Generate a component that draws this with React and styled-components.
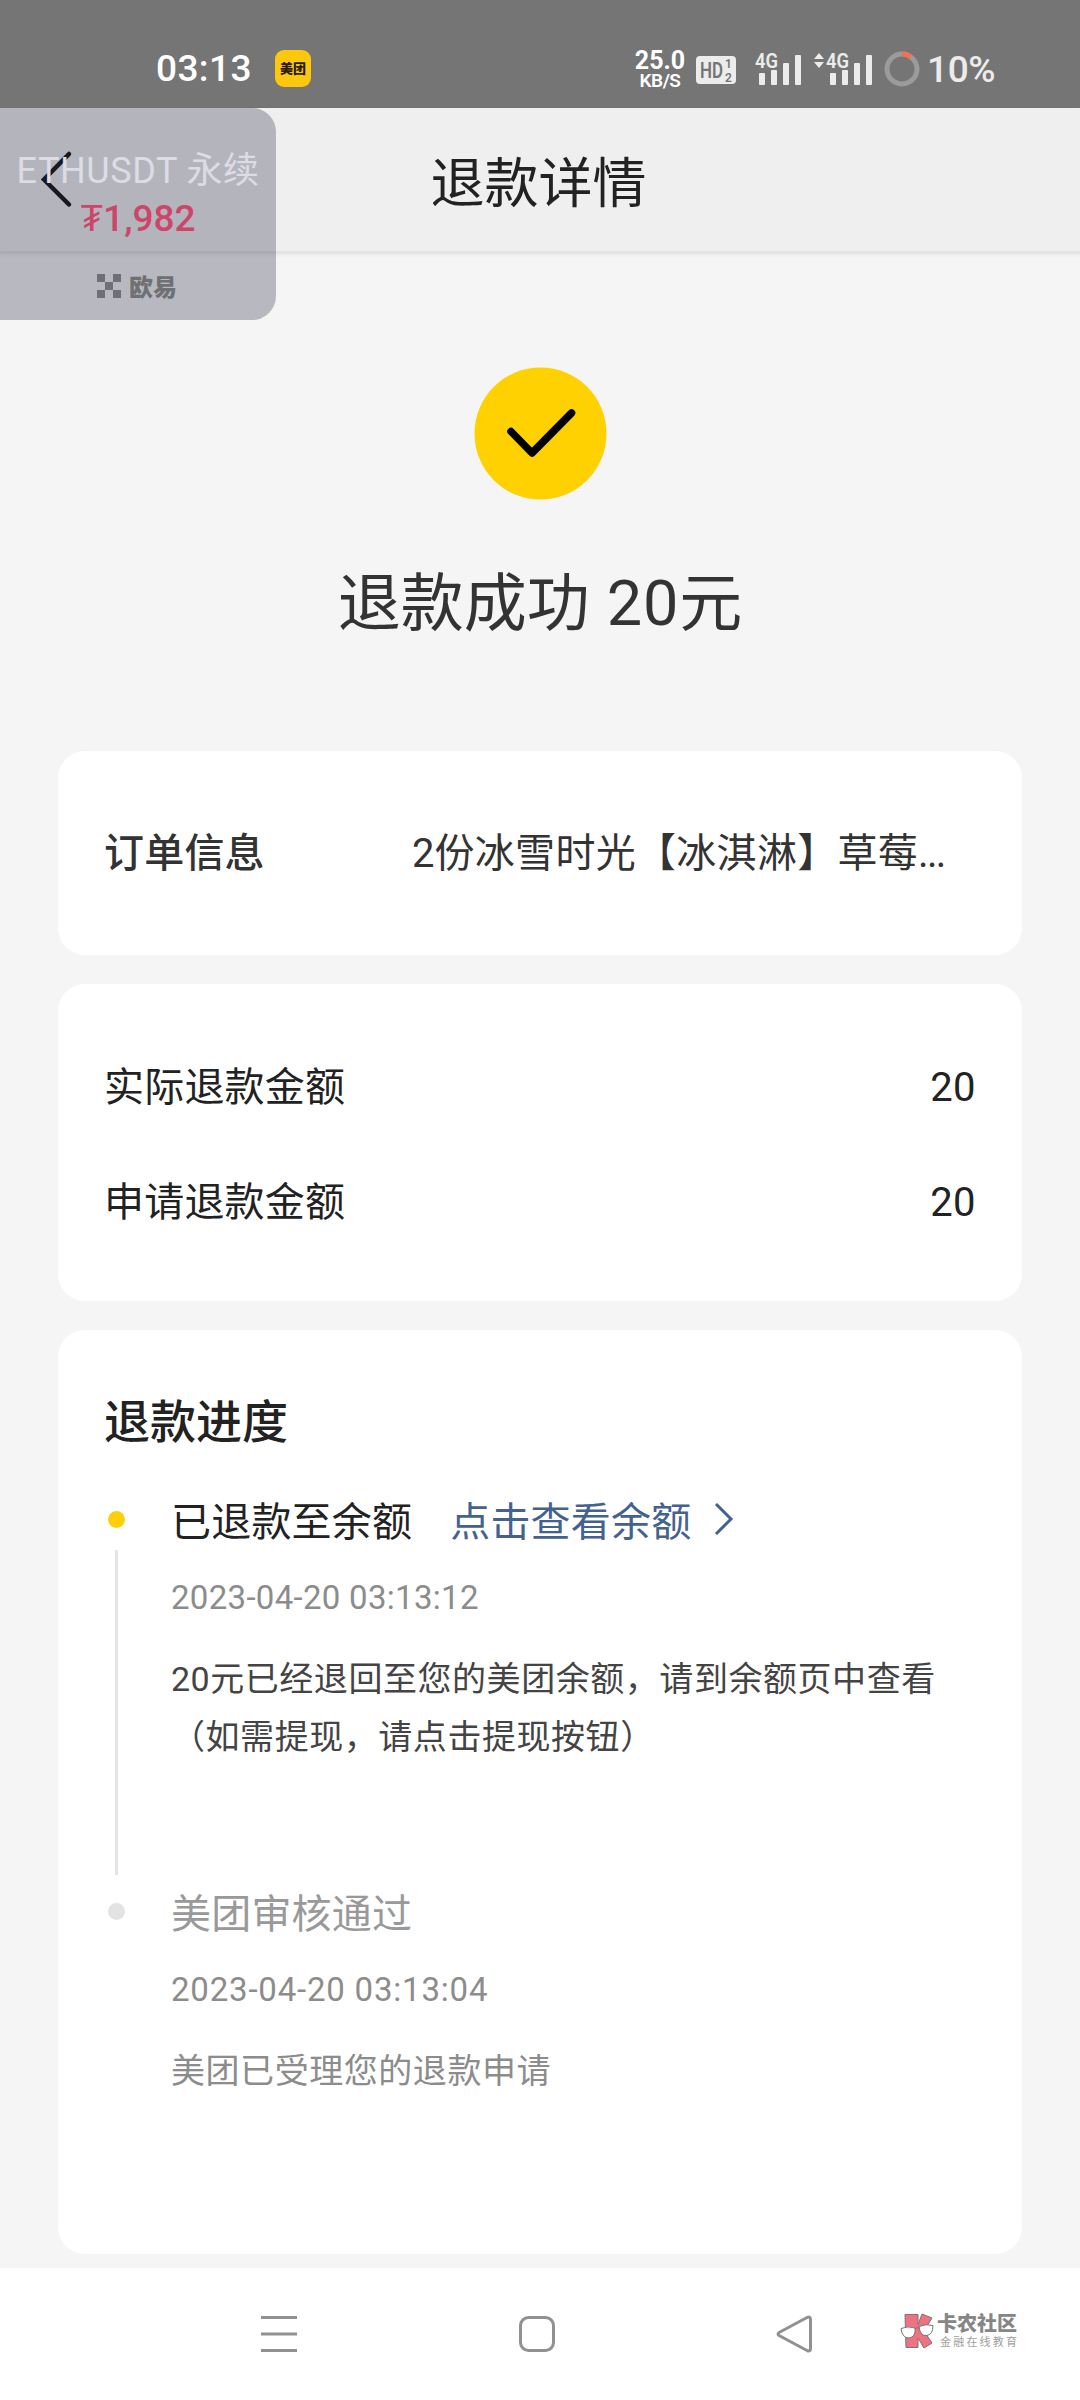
import React from 'react';
import styled, { createGlobalStyle } from 'styled-components';

const GlobalStyle = createGlobalStyle`
    * {
        box-sizing: border-box;
    }
    body {
        margin: 0;
        background: #f5f5f5;
        font-family: "Noto Sans CJK SC", sans-serif;
    }
`

const Page = styled.div`
    position: relative;
    display: flex;
    flex-direction: column;
    width: 1080px;
    height: 2400px;
    overflow: hidden;
    background: #f5f5f5;
    color: #222;
`

const Num = styled.span`
    font-family: Roboto, "Noto Sans CJK SC", sans-serif;
    line-height: 1;
    letter-spacing: ${props => props.$tracking || 0}px;
`

/* status bar */

const StatusBar = styled.div`
    display: flex;
    align-items: center;
    height: 108px;
    padding: 30px 84px 0 156px;
    background: #757575;
    color: #fff;
    font-family: Roboto, sans-serif;
`

const Clock = styled.div`
    width: 119px;
    font-size: 37px;
    font-weight: 500;
    line-height: 40px;
    letter-spacing: 0.4px;
`

const AppBadge = styled.div`
    width: 36px;
    height: 37px;
    border-radius: 9px;
    background: #fcc70d;
    color: #2a1c00;
    font-family: "Noto Sans CJK SC", sans-serif;
    font-size: 13px;
    font-weight: 900;
    line-height: 36px;
    text-align: center;
    white-space: nowrap;
`

const StatusRight = styled.div`
    display: flex;
    align-items: center;
    margin-left: auto;
    color: #ececec;
`

const NetSpeed = styled.div`
    display: flex;
    flex-direction: column;
    align-items: center;
    width: 52px;
    margin-right: 10px;
    padding-top: 3px;
    color: #fff;
`

const SpeedValue = styled.span`
    font-size: 25px;
    font-weight: 700;
    line-height: 20px;
`

const SpeedUnit = styled.span`
    font-size: 19px;
    font-weight: 600;
    line-height: 19px;
    letter-spacing: -0.5px;
`

const HdBadge = styled.svg`
    width: 40px;
    height: 28px;
    margin: 2px 19px 0 0;
    font-weight: 600;
`

const SignalIcon = styled.svg`
    width: 48px;
    height: 34px;
    margin-right: ${props => props.$gap}px;
    overflow: visible;
    font-size: 21px;
    font-weight: 600;
`

const DataArrows = styled.svg`
    width: 12px;
    height: 34px;
    margin-right: 1px;
`

const BatteryRing = styled.svg`
    width: 36px;
    height: 36px;
    margin-right: 7px;
`

const BatteryText = styled.div`
    width: 69px;
    padding-top: 2px;
    font-size: 37px;
    font-weight: 500;
    line-height: 40px;
    letter-spacing: -0.4px;
    white-space: nowrap;
`

/* title bar */

const Header = styled.header`
    display: flex;
    align-items: center;
    justify-content: center;
    height: 146px;
    background: #efefef;
    border-bottom: 3px solid #e4e4e4;
    box-shadow: 0 1px 4px rgba(0, 0, 0, 0.06);
`

const BackButton = styled.div`
    display: flex;
    width: 120px;
    padding-left: 39px;
    margin-right: auto;
`

const Title = styled.h1`
    margin: 0 auto 0 0;
    padding: 1px 123px 0 0;
    font-size: 54px;
    font-weight: 400;
    line-height: 60px;
`

/* floating price window */

const Ticker = styled.div`
    position: absolute;
    top: 108px;
    left: 0;
    display: flex;
    flex-direction: column;
    align-items: center;
    width: 276px;
    height: 212px;
    padding-top: 36px;
    border-radius: 0 24px 24px 0;
    background: rgba(43, 46, 68, 0.3);
`

const TickerPair = styled.div`
    font-size: 36px;
    font-weight: 400;
    line-height: 46px;
    letter-spacing: 0.4px;
    color: #dcdce7;
    white-space: nowrap;
`

const TickerPrice = styled.div`
    font-size: 37px;
    font-weight: 500;
    line-height: 51px;
    color: #cc4669;
`

const TickerBrand = styled.div`
    display: flex;
    align-items: center;
    gap: 8px;
    margin-top: 28px;
    padding-right: 2px;
    color: #6f7073;
    font-size: 24px;
    font-weight: 900;
    line-height: 34px;
`

/* content */

const Result = styled.section`
    display: flex;
    flex-direction: column;
    align-items: center;
    height: 497px;
    padding-top: 113px;
`

const ResultText = styled.div`
    margin-top: 58px;
    font-size: 63px;
    font-weight: 400;
    line-height: 80px;
    word-spacing: 3px;
    color: #333;
`

const Card = styled.section`
    display: flex;
    flex-direction: column;
    height: ${props => props.$height}px;
    margin: 0 58px 29px;
    padding: ${props => props.$padding};
    border-radius: 27px;
    background: #fff;
`

const Row = styled.div`
    display: flex;
    align-items: center;
    justify-content: space-between;
    height: 115px;
    font-size: 40px;
    line-height: 50px;
    letter-spacing: 0.2px;
`

const RowLabel = styled.span`
    font-weight: ${props => props.$strong ? 500 : 400};
    color: ${props => props.$strong ? '#333' : '#222'};
`

const OrderName = styled.span`
    width: 564px;
    color: #333;
    letter-spacing: 0.3px;
    white-space: nowrap;
`

const CardTitle = styled.h2`
    margin: 0 0 35px;
    font-size: 46px;
    font-weight: 500;
    line-height: 60px;
`

const Step = styled.div`
    display: flex;
    height: ${props => props.$height}px;
`

const Rail = styled.div`
    display: flex;
    flex-direction: column;
    align-items: center;
    width: 25px;
    margin-right: 42px;
    padding-top: 28px;
`

const Dot = styled.div`
    width: 17px;
    height: 17px;
    flex: none;
    border-radius: 50%;
    background: ${props => props.$active ? '#fecf0a' : '#e3e3e3'};
`

const RailLine = styled.div`
    width: 3px;
    height: 328px;
    margin-top: 22px;
    background: #e5e5e5;
`

const StepBody = styled.div`
    display: flex;
    flex-direction: column;
    color: ${props => props.$active ? '#444' : '#8c8c8c'};
`

const StepTitle = styled.div`
    display: flex;
    align-items: center;
    height: 71px;
    font-size: 40px;
    letter-spacing: 0.2px;
    color: ${props => props.$active ? '#222' : '#999'};
`

const StepLink = styled.a`
    display: flex;
    align-items: center;
    gap: 23px;
    margin-left: 38px;
    color: #44628f;
`

const StepTime = styled.div`
    height: 94px;
    font-family: Roboto, sans-serif;
    font-size: 33px;
    line-height: 87px;
    letter-spacing: ${props => props.$tracking}px;
    color: #8c8c8c;
`

const StepText = styled.p`
    margin: 0;
    font-size: 34px;
    line-height: 58px;
    letter-spacing: 0.55px;
    white-space: pre;
`

/* bottom navigation */

const NavBar = styled.nav`
    display: flex;
    align-items: center;
    height: 132px;
    margin-top: -15px;
    padding: 0 63px 0 260px;
    background: #fff;
`

const NavIcon = styled.svg`
    width: 38px;
    height: 38px;
    margin-right: ${props => props.$gap}px;
    fill: none;
    stroke: #919191;
    stroke-width: 3;
`

const Watermark = styled.div`
    display: flex;
    align-items: center;
    margin-top: -7px;
    margin-left: auto;
    gap: 3px;
`

const WatermarkText = styled.div`
    display: flex;
    flex-direction: column;
    width: 80px;
    white-space: nowrap;
`

const WatermarkName = styled.span`
    font-size: 20px;
    font-weight: 900;
    line-height: 20px;
    color: #868686;
`

const WatermarkSlogan = styled.span`
    padding-left: 3px;
    font-size: 11px;
    line-height: 16px;
    letter-spacing: 2.2px;
    color: #a0a0a0;
`

const Signal = ({ gap }) => (
    <SignalIcon $gap={gap} viewBox="0 0 48 34" fill="#ececec">
        <text x="0" y="16" textLength="23" lengthAdjust="spacingAndGlyphs">4G</text>
        <rect x="4" y="21" width="6" height="12" rx="1" />
        <rect x="16" y="18" width="6" height="15" rx="1" />
        <rect x="28" y="11" width="6" height="22" rx="1" />
        <rect x="40" y="3" width="6" height="30" rx="1" />
    </SignalIcon>
)

const amounts = [
    { label: '实际退款金额', value: '20' },
    { label: '申请退款金额', value: '20' },
]

const App = () => {
    return (
        <>
            <GlobalStyle />
            <Page>
                <StatusBar>
                    <Clock>03:13</Clock>
                    <AppBadge>美团</AppBadge>
                    <StatusRight>
                        <NetSpeed>
                            <SpeedValue>25.0</SpeedValue>
                            <SpeedUnit>KB/S</SpeedUnit>
                        </NetSpeed>
                        <HdBadge viewBox="0 0 40 28">
                            <rect width="40" height="28" rx="4" fill="#ececec" />
                            <g fill="#757575">
                                <text x="4" y="22" fontSize="22" textLength="23" lengthAdjust="spacingAndGlyphs">HD</text>
                                <text x="29" y="12" fontSize="12">1</text>
                                <text x="29" y="26" fontSize="12">2</text>
                            </g>
                        </HdBadge>
                        <Signal gap={10} />
                        <DataArrows viewBox="0 0 12 34" fill="#ececec">
                            <path d="M6 1l5 6H1zM6 16l5-6H1z" />
                        </DataArrows>
                        <Signal gap={10} />
                        <BatteryRing viewBox="0 0 36 36" fill="none" strokeWidth="5">
                            <circle cx="18" cy="18" r="15" stroke="#9b9b9b" />
                            <path d="M18 3a15 15 0 0 1 8.8 2.9" stroke="#f47150" />
                        </BatteryRing>
                        <BatteryText>10%</BatteryText>
                    </StatusRight>
                </StatusBar>

                <Header>
                    <BackButton>
                        <svg width="34" height="58" viewBox="0 0 34 58" fill="none" stroke="#111" strokeWidth="4.5">
                            <path d="M30 4L5 29.500l25 25" strokeLinecap="round" />
                        </svg>
                    </BackButton>
                    <Title>退款详情</Title>
                </Header>

                <Result>
                    <svg width="133" height="133" viewBox="0 0 133 133">
                        <circle cx="66.5" cy="66.5" r="66" fill="#ffd100" />
                        <path d="M37 64.500l21 21.500 39.500-40" fill="none" stroke="#000" strokeWidth="7.500" strokeLinecap="round" strokeLinejoin="round" />
                    </svg>
                    <ResultText>退款成功 <Num $tracking={0.8}>20</Num>元</ResultText>
                </Result>

                <Card $height={204} $padding="42px 46px">
                    <Row>
                        <RowLabel $strong>订单信息</RowLabel>
                        <OrderName><Num>2</Num>份冰雪时光【冰淇淋】草莓<Num $tracking={-1.7}>...</Num></OrderName>
                    </Row>
                </Card>

                <Card $height={318} $padding="43px 46px">
                    {amounts.map(item => (
                        <Row key={item.label}>
                            <RowLabel>{item.label}</RowLabel>
                            <RowLabel><Num $tracking={0.4}>{item.value}</Num></RowLabel>
                        </Row>
                    ))}
                </Card>

                <Card $height={924} $padding="58px 46px 0">
                    <CardTitle>退款进度</CardTitle>
                    <Step $height={392}>
                        <Rail>
                            <Dot $active />
                            <RailLine />
                        </Rail>
                        <StepBody $active>
                            <StepTitle $active>
                                已退款至余额
                                <StepLink>
                                    点击查看余额
                                    <svg width="20" height="32" viewBox="0 0 20 32" fill="none" stroke="#44628f" strokeWidth="3">
                                        <path d="M2 1l15 15L2 31" />
                                    </svg>
                                </StepLink>
                            </StepTitle>
                            <StepTime $tracking={0.3}>2023-04-20 03:13:12</StepTime>
                            <StepText><Num $tracking={0.5}>20</Num>元已经退回至您的美团余额，请到余额页中查看{'\n'}（如需提现，请点击提现按钮）</StepText>
                        </StepBody>
                    </Step>
                    <Step $height={300}>
                        <Rail>
                            <Dot />
                        </Rail>
                        <StepBody>
                            <StepTitle>美团审核通过</StepTitle>
                            <StepTime $tracking={0.8}>2023-04-20 03:13:04</StepTime>
                            <StepText>美团已受理您的退款申请</StepText>
                        </StepBody>
                    </Step>
                </Card>

                <NavBar>
                    <NavIcon $gap={220} viewBox="0 0 38 38">
                        <path d="M1 2.500h36M1 19h36M1 35.500h36" />
                    </NavIcon>
                    <NavIcon $gap={220} viewBox="0 0 38 38">
                        <rect x="2.500" y="2.500" width="33" height="33" rx="8" />
                    </NavIcon>
                    <NavIcon $gap={0} viewBox="0 0 38 38">
                        <path d="M31 2.500L3.500 17.200q-3 1.800 0 3.600L31 35.500q3.500 1.500 3.500-2V4.500q0-3.500-3.500-2z" />
                    </NavIcon>
                    <Watermark>
                        <svg width="34" height="36" viewBox="0 0 34 36" fill="#f0717f" stroke="#777" strokeWidth="1">
                            <path d="M5 1.500h13v10L22 1l10 4-8 13 8 12-8 5-6-10v9.500H6z" />
                            <path d="M1 15.500q7-3 14-.5 1 9-6 10-7 0-8-9.500zM19 13.500q7-3 14-1 0 9-6 10-7 1-8-9z" fill="#fff" />
                            <path d="M15 16q2-2 4-1" fill="none" />
                        </svg>
                        <WatermarkText>
                            <WatermarkName>卡农社区</WatermarkName>
                            <WatermarkSlogan>金融在线教育</WatermarkSlogan>
                        </WatermarkText>
                    </Watermark>
                </NavBar>

                <Ticker>
                    <TickerPair><Num $tracking={0.6}>ETHUSDT</Num> 永续</TickerPair>
                    <TickerPrice><Num>₮1,982</Num></TickerPrice>
                    <TickerBrand>
                        <svg width="24" height="24" viewBox="0 0 24 24" fill="#6f7073">
                            <path d="M0 0h8v8H0zM16 0h8v8h-8zM8 8h8v8H8zM0 16h8v8H0zM16 16h8v8h-8z" />
                        </svg>
                        欧易
                    </TickerBrand>
                </Ticker>
            </Page>
        </>
    )
}

export default App;
